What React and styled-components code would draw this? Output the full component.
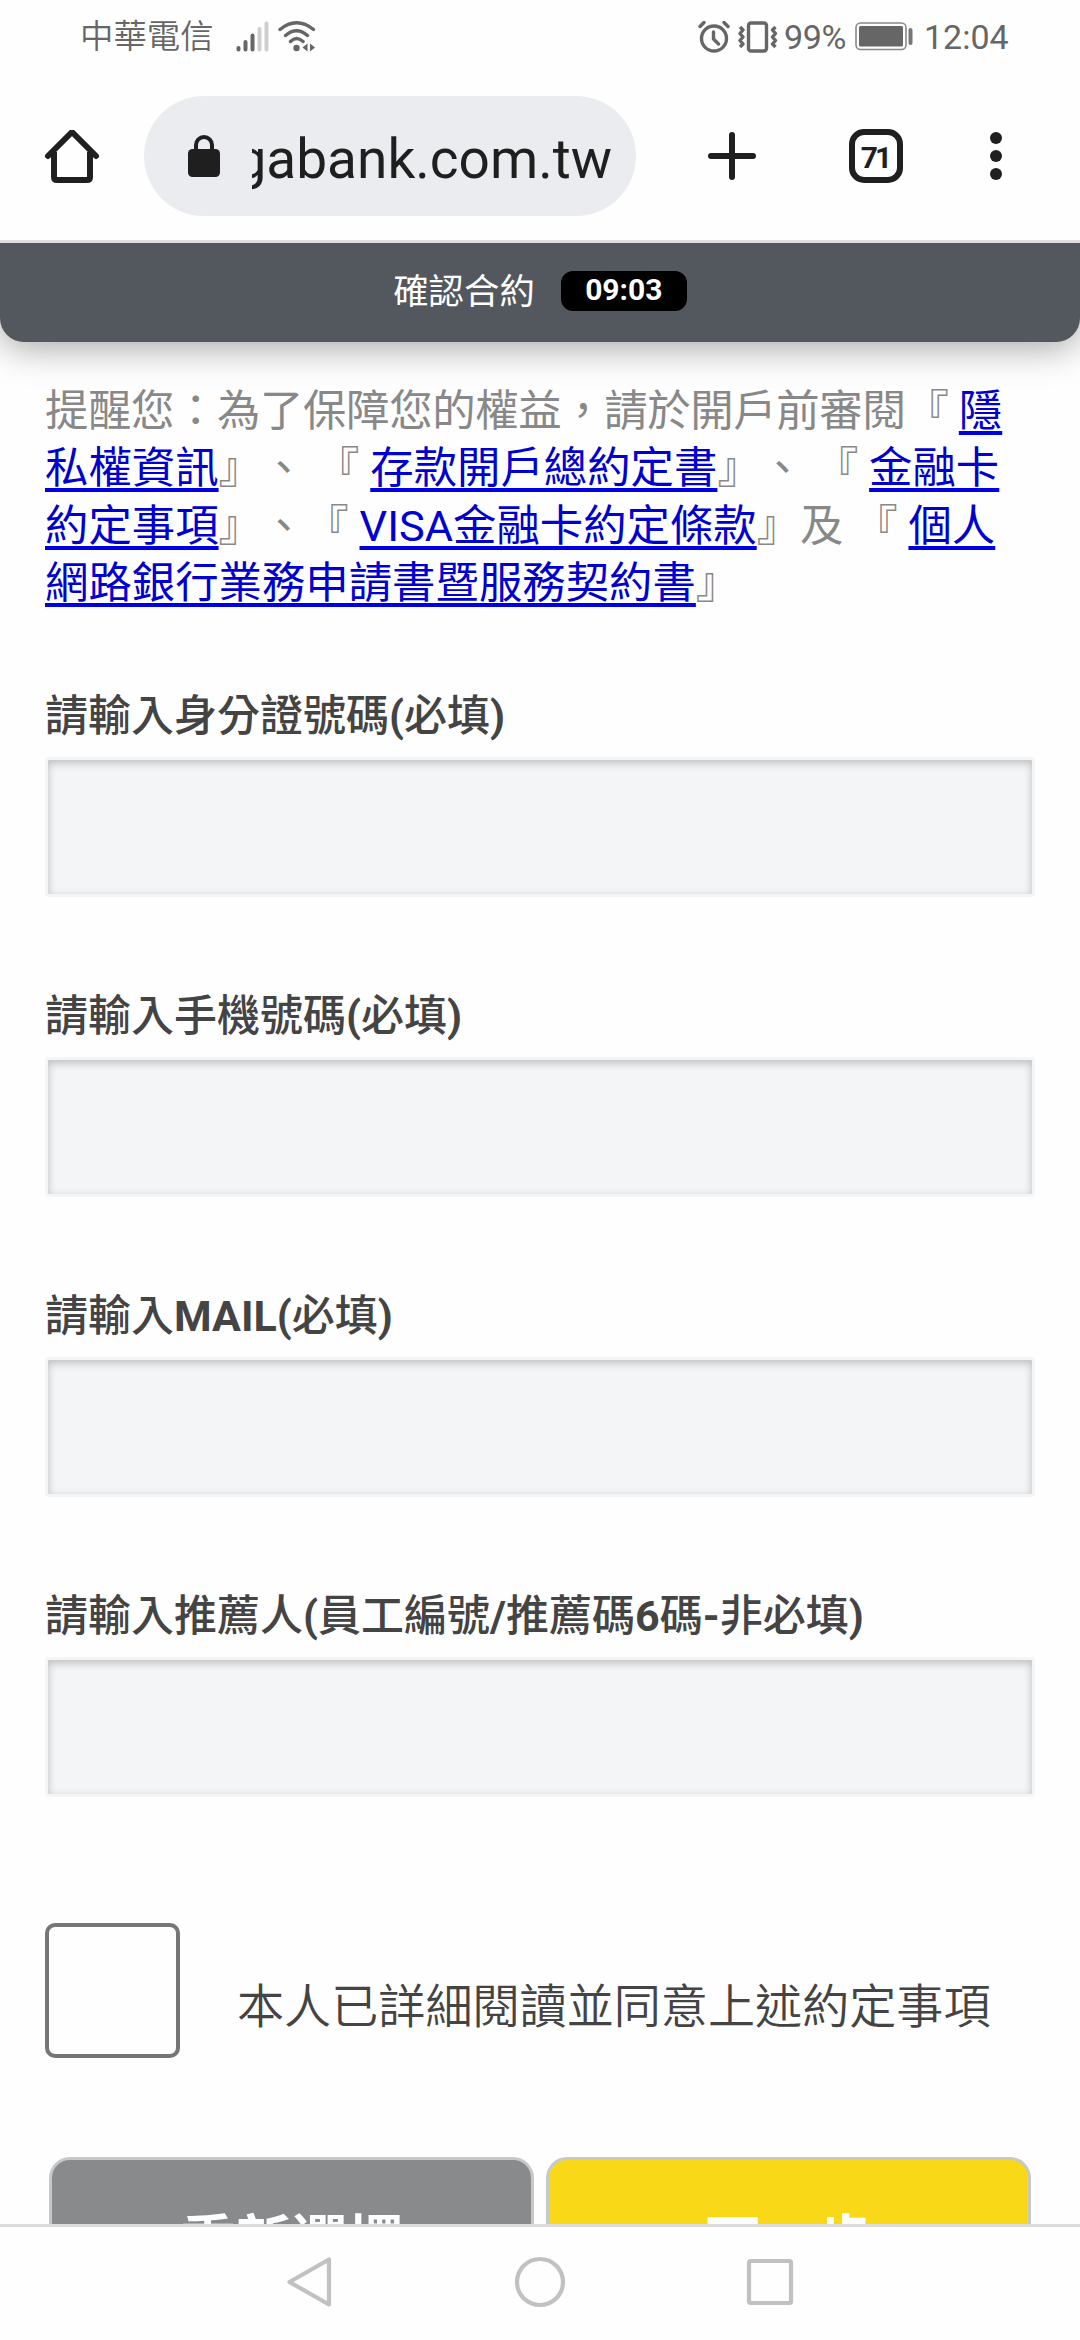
import React from 'react';
import styled, { createGlobalStyle } from 'styled-components';

const GlobalStyle = createGlobalStyle`
  * {
    box-sizing: border-box;
  }

  body {
    margin: 0;
    background: #fff;
    font-family: Roboto, "Noto Sans CJK TC", sans-serif;
    text-spacing-trim: space-all;
  }
`

const Screen = styled.div`
  width: 1080px;
  height: 2340px;
  display: flex;
  flex-direction: column;
  overflow: hidden;
  background: #fefefe;
`

const StatusBar = styled.header`
  height: 72px;
  flex-shrink: 0;
  display: flex;
  align-items: center;
  padding: 1px 72px 0 80px;
  color: #666;
  font-size: 34px;
  line-height: 72px;
`

const Carrier = styled.span`
  width: 156px;
  font-size: 33.4px;
  font-weight: 350;
`

const StatusRight = styled.div`
  margin-left: auto;
  display: flex;
  align-items: center;
`

const Percent = styled.span`
  width: 71px;
  margin-left: 6px;
  letter-spacing: -0.3px;
`

const Clock = styled.span`
  width: 84px;
  margin-left: 11px;
`

const Toolbar = styled.div`
  height: 171px;
  flex-shrink: 0;
  display: flex;
  align-items: center;
  padding: 0 42px 0 42px;
  border-bottom: 3px solid #dfdfdf;
  color: #1f1f1f;
`

const AddressBar = styled.div`
  width: 492px;
  height: 120px;
  margin: 0 66px 0 42px;
  padding: 0 24px 0 44px;
  display: flex;
  align-items: center;
  border-radius: 60px;
  background: #ebecf0;
`

const Url = styled.div`
  width: 360px;
  margin-left: 32px;
  padding-top: 5px;
  display: flex;
  justify-content: flex-end;
  overflow: hidden;
  font-size: 55px;
  line-height: 76px;
  white-space: nowrap;
`

const Tabs = styled.div`
  width: 54px;
  height: 54px;
  margin: 0 84px 0 87px;
  display: flex;
  align-items: center;
  justify-content: center;
  padding: 2px 2px 0 0;
  border: 6px solid #1f1f1f;
  border-radius: 15px;
  font-size: 30px;
  font-weight: 700;
  letter-spacing: -3px;
`

const Page = styled.main`
  flex: 1;
  min-height: 0;
  overflow: hidden;
`

const StepBar = styled.div`
  height: 99px;
  display: flex;
  align-items: center;
  justify-content: center;
  gap: 26px;
  padding-bottom: 3px;
  border-radius: 0 0 24px 24px;
  background: #53575e;
  box-shadow: 0 6px 36px rgba(0, 0, 0, 0.35);
  color: #fff;
  font-size: 35.4px;
`

const StepName = styled.span`
  margin-bottom: 5px;
`

const Timer = styled.span`
  width: 126px;
  height: 40px;
  border-radius: 12px;
  background: #000;
  font-size: 30px;
  font-weight: 700;
  line-height: 38px;
  text-align: center;
`

const Content = styled.div`
  padding: 41px 45px 0;
`

const Notice = styled.p`
  height: 230px;
  margin: 0;
  color: #888;
  font-size: 43.4px;
  line-height: 57.3px;
  white-space: nowrap;
`

const Intro = styled.span`
  letter-spacing: -0.37px;
`

const Link = styled.a`
  color: #0000d0;
  text-decoration: underline;
  text-decoration-color: #0000e4;
  text-decoration-thickness: 4px;
  text-underline-offset: 5px;
  text-decoration-skip-ink: none;
`

const Field = styled.div`
  height: 300px;
`

const Label = styled.label`
  display: block;
  height: 72px;
  padding-top: 0.5px;
  color: #444;
  font-size: 43px;
  font-weight: 500;
  line-height: 60px;
  white-space: nowrap;

  b {
    font-weight: 700;
  }
`

const Input = styled.input`
  display: block;
  width: 990px;
  height: 140px;
  border: 3px solid #f4f5f6;
  border-radius: 4px;
  outline: none;
  background: #f4f5f7;
  box-shadow: inset 0 3px 9px rgba(0, 0, 0, 0.23);
`

const Fields = styled.div`
  padding-top: 72px;
`

const Agree = styled.label`
  display: flex;
  align-items: flex-start;
  height: 234px;
  margin-top: 38px;
  color: #444;
`

const Checkbox = styled.span`
  width: 135px;
  height: 135px;
  border: 4px solid #767676;
  border-radius: 10px;
`

const AgreeText = styled.span`
  margin: 50px 0 0 57px;
  font-size: 47.1px;
  font-weight: 350;
  line-height: 68px;
  white-space: nowrap;
`

const Actions = styled.div`
  display: flex;
  gap: 12px;
  padding: 0 4px;
`

const Button = styled.button`
  width: 485px;
  height: 158px;
  padding: 0;
  border: 3px solid #c6c8ca;
  border-radius: 21px;
  background: ${(props) => props.$color};
  color: #fff;
  font-family: inherit;
  font-size: 55.8px;
  font-weight: 700;
`

const NavBar = styled.nav`
  height: 116px;
  flex-shrink: 0;
  display: flex;
  align-items: center;
  justify-content: center;
  gap: 178px;
  padding-bottom: 3px;
  border-top: 3px solid #dcdcdc;
  background: #fefefe;
`

const SignalIcon = () => (
  <svg width="34" height="31" viewBox="0 0 34 31" strokeWidth="4" strokeLinecap="round">
    <path d="M2.5 27v1.5M9.5 21v7.5M16.5 14.5v14" stroke="#666" />
    <path d="M23.5 8v20.5M30.5 2.5v26" stroke="#cfcfcf" />
  </svg>
)

const WifiIcon = () => (
  <svg width="38" height="31" viewBox="0 0 38 31" fill="none" stroke="#666" strokeWidth="3.4" strokeLinecap="round">
    <path d="M2 8.500Q18.500 -5 35.500 8.500M7.500 14.500Q18.500 5 29.500 14.500M12.500 20.500Q18.500 14.500 25 20.500" />
    <circle cx="18.500" cy="27" r="3.200" fill="#666" stroke="none" />
    <path d="M29.500 22.500v8l-5-4zM32 22.500l5 4-5 4z" fill="#666" stroke="none" />
  </svg>
)

const AlarmIcon = () => (
  <svg width="32" height="32" viewBox="0 0 32 32" fill="none" stroke="#666" strokeWidth="3.4" strokeLinecap="round">
    <circle cx="16" cy="17.500" r="12.500" />
    <path d="M15.500 11v7l5 5" />
    <path d="M2 5.500l4-4M30 5.500l-4-4" />
  </svg>
)

const VibrateIcon = () => (
  <svg width="40" height="32" viewBox="0 0 40 32" fill="none" stroke="#666" strokeWidth="3.4">
    <rect x="10.500" y="2" width="18" height="28" rx="2.500" />
    <path d="M2 6l3 3-3 3.500 3 3.500-3 3.500 3 3.500-3 3M37.500 6l-3 3 3 3.500-3 3.500 3 3.500-3 3.500 3 3" strokeLinejoin="round" />
  </svg>
)

const BatteryIcon = () => (
  <svg width="58" height="29" viewBox="0 0 58 29" fill="none">
    <rect x="1" y="1" width="50" height="26.500" rx="4.500" stroke="#888" strokeWidth="1.600" />
    <rect x="4" y="4" width="44" height="20.500" rx="1.500" fill="#666" />
    <rect x="53.500" y="6" width="4" height="17" rx="2" fill="#777" />
  </svg>
)

const HomeIcon = () => (
  <svg width="60" height="60" viewBox="0 0 60 60" fill="none" stroke="#1f1f1f" strokeWidth="6" strokeLinecap="round" strokeLinejoin="round">
    <path d="M6 30L30 6L54 30" strokeLinejoin="miter" strokeMiterlimit="1" />
    <path d="M12 26V51Q12 54 15 54H45Q48 54 48 51V26" strokeLinecap="butt" />
  </svg>
)

const LockIcon = () => (
  <svg width="32" height="42" viewBox="0 0 32 42">
    <path d="M8 16V10a8 8 0 0 1 16 0v6" fill="none" stroke="#1f1f1f" strokeWidth="4" />
    <rect y="14" width="32" height="28" rx="4.500" fill="#1f1f1f" />
  </svg>
)

const PlusIcon = () => (
  <svg width="60" height="60" viewBox="0 0 60 60" stroke="#1f1f1f" strokeWidth="6" strokeLinecap="round">
    <path d="M30 9v42M9 30h42" />
  </svg>
)

const MenuIcon = () => (
  <svg width="18" height="60" viewBox="0 0 18 60" fill="#1f1f1f">
    <circle cx="9" cy="12" r="6" />
    <circle cx="9" cy="30" r="6" />
    <circle cx="9" cy="48" r="6" />
  </svg>
)

const NavIcon = ({ children }) => (
  <svg width="52" height="52" viewBox="0 0 52 52" fill="none" stroke="#c1c1c1" strokeWidth="4.200" strokeLinejoin="round">
    {children}
  </svg>
)

const App = () => {
  return (
    <Screen>
      <GlobalStyle />
      <StatusBar>
        <Carrier>中華電信</Carrier>
        <SignalIcon />
        <span>&nbsp;</span>
        <WifiIcon />
        <StatusRight>
          <AlarmIcon />
          <span>&nbsp;</span>
          <VibrateIcon />
          <Percent>99%</Percent>
          <BatteryIcon />
          <Clock>12:04</Clock>
        </StatusRight>
      </StatusBar>
      <Toolbar>
        <HomeIcon />
        <AddressBar>
          <LockIcon />
          <Url><span>gabank.com.tw</span></Url>
        </AddressBar>
        <PlusIcon />
        <Tabs>71</Tabs>
        <MenuIcon />
      </Toolbar>
      <Page>
        <StepBar>
          <StepName>確認合約</StepName>
          <Timer>09:03</Timer>
        </StepBar>
        <Content>
          <Notice>
            <Intro>提醒您：為了保障您的權益，請於開戶前審閱『 </Intro><Link>隱</Link><br />
            <Link>私權資訊</Link>』、&nbsp;『 <Link>存款開戶總約定書</Link>』、&nbsp;『 <Link>金融卡</Link><br />
            <Link>約定事項</Link>』、『 <Link>VISA金融卡約定條款</Link>』及&nbsp;『 <Link>個人</Link><br />
            <Link>網路銀行業務申請書暨服務契約書</Link>』
          </Notice>
          <Fields>
            <Field>
              <Label>請輸入身分證號碼<b>(</b>必填<b>)</b></Label>
              <Input />
            </Field>
            <Field>
              <Label>請輸入手機號碼<b>(</b>必填<b>)</b></Label>
              <Input />
            </Field>
            <Field>
              <Label>請輸入<b>MAIL(</b>必填<b>)</b></Label>
              <Input />
            </Field>
            <Field>
              <Label>請輸入推薦人<b>(</b>員工編號<b>/</b>推薦碼<b>6</b>碼<b>-</b>非必填<b>)</b></Label>
              <Input />
            </Field>
          </Fields>
          <Agree>
            <Checkbox />
            <AgreeText>本人已詳細閱讀並同意上述約定事項</AgreeText>
          </Agree>
          <Actions>
            <Button $color="#898a8c">重新選擇</Button>
            <Button $color="#f9d817">下一步</Button>
          </Actions>
        </Content>
      </Page>
      <NavBar>
        <NavIcon>
          <path d="M45 3.500V48.500L5.500 26z" />
        </NavIcon>
        <NavIcon>
          <circle cx="26" cy="26" r="23" />
        </NavIcon>
        <NavIcon>
          <rect x="5" y="5" width="42" height="42" rx="1.500" />
        </NavIcon>
      </NavBar>
    </Screen>
  )
}

export default App
